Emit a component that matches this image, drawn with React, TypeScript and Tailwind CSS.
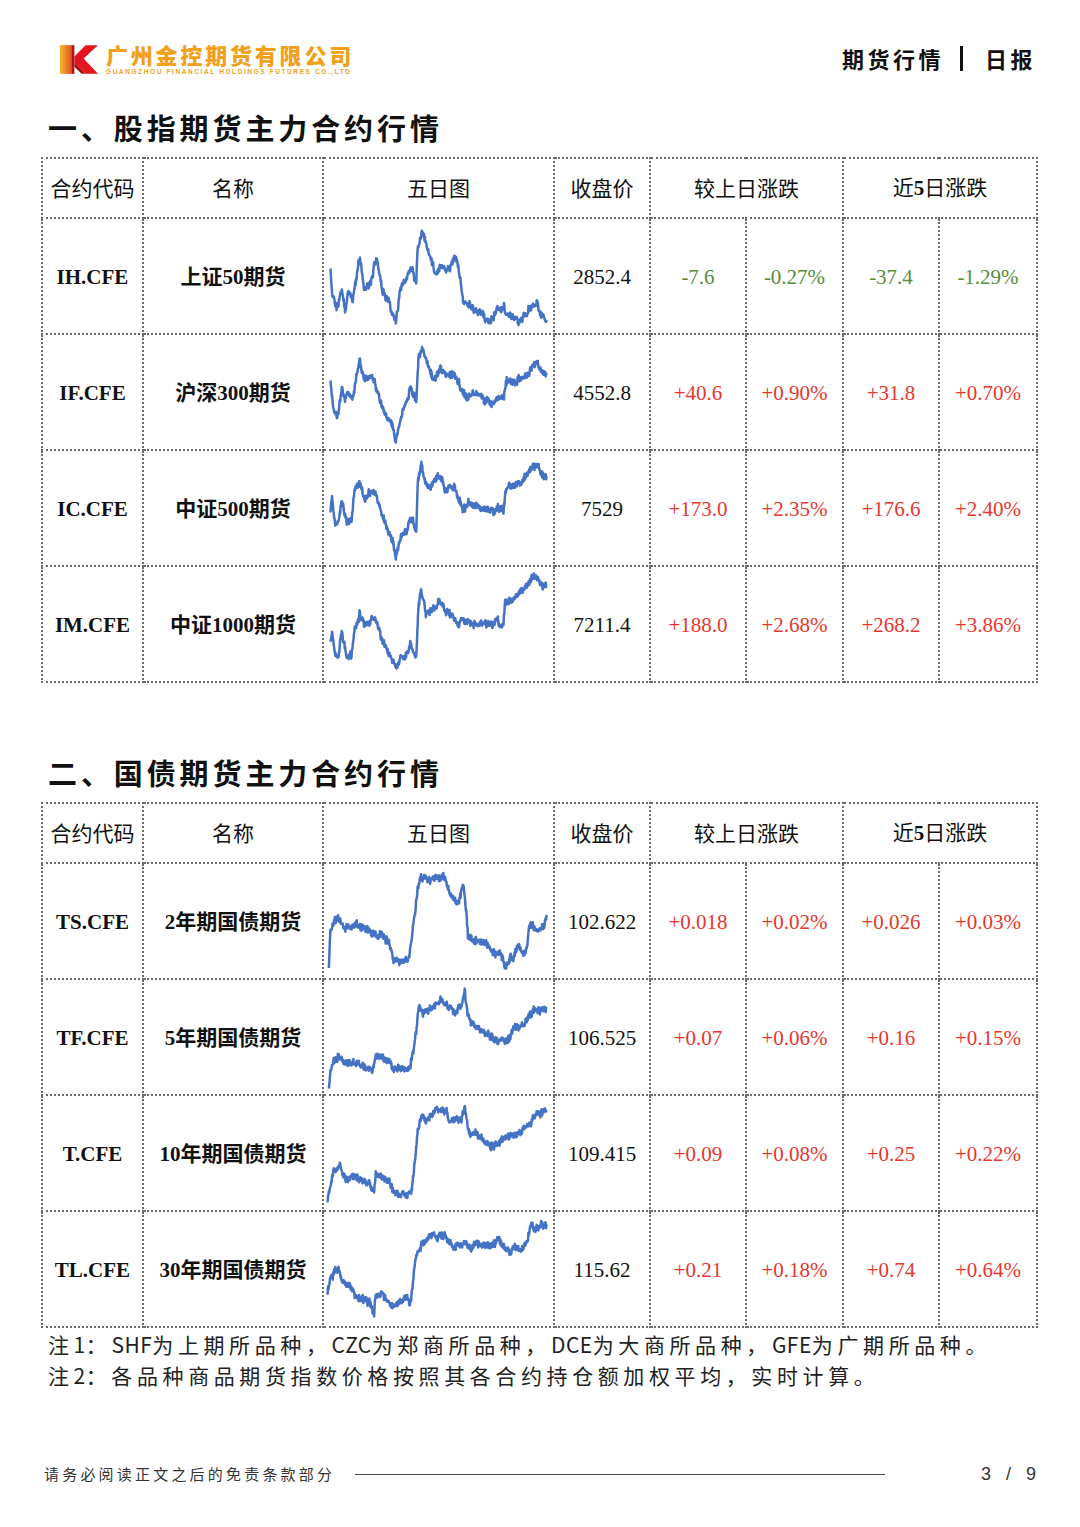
import React from "react";

type Pt = [number, number];

type Row = {
  code: string;
  name: string;
  close: string;
  d1: string;
  d1p: string;
  d5: string;
  d5p: string;
  up: boolean;
  line: Pt[];
  seed: number;
};

const stockRows: Row[] = [
  {
    code: "IH.CFE", name: "上证50期货", close: "2852.4", d1: "-7.6", d1p: "-0.27%", d5: "-37.4", d5p: "-1.29%", up: false, seed: 11,
    line: [[20,150],[25,230],[40,275],[55,215],[65,285],[78,215],[88,250],[100,180],[110,115],[125,220],[145,195],[155,140],[165,130],[180,220],[200,250],[210,290],[222,320],[235,225],[260,170],[270,150],[285,200],[290,90],[305,35],[320,90],[335,140],[345,175],[360,145],[375,155],[390,150],[405,115],[415,140],[430,250],[450,265],[470,280],[490,295],[510,320],[520,305],[535,275],[555,270],[565,290],[590,305],[605,315],[625,295],[645,260],[660,270],[675,300],[688,310]],
  },
  {
    code: "IF.CFE", name: "沪深300期货", close: "4552.8", d1: "+40.6", d1p: "+0.90%", d5: "+31.8", d5p: "+0.70%", up: true, seed: 23,
    line: [[20,150],[30,230],[42,245],[55,165],[65,200],[75,170],[90,200],[100,130],[110,75],[125,135],[150,125],[165,170],[180,225],[200,265],[212,280],[222,325],[235,265],[255,200],[268,155],[285,205],[292,80],[302,30],[320,90],[335,130],[345,135],[360,100],[375,120],[400,120],[415,140],[430,180],[445,185],[470,180],[490,190],[510,200],[525,210],[540,195],[555,190],[565,140],[590,145],[610,125],[630,120],[650,88],[662,90],[675,115],[688,120]],
  },
  {
    code: "IC.CFE", name: "中证500期货", close: "7529", d1: "+173.0", d1p: "+2.35%", d5: "+176.6", d5p: "+2.40%", up: true, seed: 37,
    line: [[20,180],[25,140],[35,230],[45,215],[55,150],[70,220],[85,215],[95,125],[110,90],[125,145],[150,115],[165,150],[180,200],[200,250],[212,275],[222,320],[235,265],[255,245],[268,200],[285,245],[290,90],[300,35],[315,100],[330,105],[345,85],[360,75],[375,115],[400,110],[415,140],[430,180],[445,160],[470,170],[490,175],[510,180],[525,185],[540,175],[555,180],[560,130],[575,105],[600,100],[625,75],[645,40],[660,45],[675,70],[688,75]],
  },
  {
    code: "IM.CFE", name: "中证1000期货", close: "7211.4", d1: "+188.0", d1p: "+2.68%", d5: "+268.2", d5p: "+3.86%", up: true, seed: 41,
    line: [[20,225],[25,195],[35,280],[45,275],[55,195],[70,275],[85,270],[95,190],[110,145],[125,180],[150,155],[165,170],[180,230],[200,265],[212,285],[222,310],[235,280],[255,270],[268,230],[285,280],[292,120],[300,70],[315,140],[330,130],[345,120],[360,105],[375,135],[400,150],[415,180],[425,160],[445,165],[470,175],[490,170],[510,175],[535,170],[555,175],[560,110],[575,100],[600,80],[625,55],[645,30],[660,30],[675,55],[688,58]],
  },
];

const bondRows: Row[] = [
  {
    code: "TS.CFE", name: "2年期国债期货", close: "102.622", d1: "+0.018", d1p: "+0.02%", d5: "+0.026", d5p: "+0.03%", up: true, seed: 53,
    line: [[15,320],[20,200],[30,180],[45,160],[60,195],[85,200],[100,185],[120,195],[140,205],[160,220],[180,215],[200,240],[215,290],[240,300],[260,295],[270,240],[280,160],[292,60],[300,35],[320,45],[340,40],[375,40],[390,90],[410,120],[420,110],[430,55],[440,150],[445,225],[470,235],[500,240],[515,260],[530,280],[545,265],[560,320],[575,290],[590,280],[600,250],[610,275],[625,270],[635,185],[650,195],[665,200],[680,185],[688,155]],
  },
  {
    code: "TF.CFE", name: "5年期国债期货", close: "106.525", d1: "+0.07", d1p: "+0.06%", d5: "+0.16", d5p: "+0.15%", up: true, seed: 67,
    line: [[15,330],[20,280],[30,250],[45,230],[70,260],[85,255],[110,260],[130,265],[150,285],[160,230],[175,235],[200,240],[215,270],[240,275],[265,270],[275,225],[285,150],[295,75],[305,100],[320,90],[340,80],[360,60],[375,70],[395,90],[410,95],[425,70],[435,35],[445,110],[460,140],[480,145],[500,165],[520,175],[535,190],[560,180],[575,175],[585,140],[600,145],[620,130],[640,100],[665,95],[688,80]],
  },
  {
    code: "T.CFE", name: "10年期国债期货", close: "109.415", d1: "+0.09", d1p: "+0.08%", d5: "+0.25", d5p: "+0.22%", up: true, seed: 71,
    line: [[10,325],[20,270],[30,235],[50,215],[65,255],[85,245],[100,250],[120,255],[140,270],[155,295],[160,240],[180,245],[200,260],[215,295],[235,305],[260,300],[272,285],[280,200],[290,110],[300,60],[320,75],[340,45],[360,40],[380,45],[390,75],[410,70],[425,75],[435,30],[445,100],[460,120],[480,115],[500,145],[515,155],[530,150],[545,140],[565,130],[580,125],[600,115],[620,95],[640,80],[655,55],[670,55],[688,40]],
  },
  {
    code: "TL.CFE", name: "30年期国债期货", close: "115.62", d1: "+0.21", d1p: "+0.18%", d5: "+0.74", d5p: "+0.64%", up: true, seed: 89,
    line: [[10,245],[20,200],[35,185],[45,175],[55,210],[75,225],[90,245],[100,265],[115,260],[130,270],[145,285],[155,320],[160,255],[175,250],[190,265],[205,285],[220,290],[240,275],[255,265],[268,280],[275,215],[285,130],[295,105],[315,90],[330,70],[350,75],[375,65],[385,95],[400,105],[420,100],[440,90],[455,115],[470,95],[490,100],[510,105],[525,95],[540,80],[555,100],[575,125],[590,105],[610,115],[625,95],[640,40],[655,55],[670,35],[688,35]],
  },
];

function rng(seed: number) {
  let a = seed;
  return () => {
    a |= 0;
    a = (a + 0x6d2b79f5) | 0;
    let t = Math.imul(a ^ (a >>> 15), 1 | a);
    t = (t + Math.imul(t ^ (t >>> 7), 61 | t)) ^ t;
    return ((t ^ (t >>> 14)) >>> 0) / 4294967296;
  };
}

// interpolate the key points and add tick noise so it looks like intraday data
function buildPath(pts: Pt[], seed: number) {
  const r = rng(seed);
  const out: string[] = [];
  let walk = 0;
  for (let i = 0; i < pts.length - 1; i++) {
    const [x0, y0] = pts[i];
    const [x1, y1] = pts[i + 1];
    const steps = Math.max(1, Math.round((x1 - x0) / 1.2));
    for (let s = 0; s < steps; s++) {
      const t = s / steps;
      const x = x0 + (x1 - x0) * t;
      walk = walk * 0.6 + (r() - 0.5) * 12;
      const tick = (r() - 0.5) * 16;
      const y = y0 + (y1 - y0) * t + walk + tick;
      out.push(`${x.toFixed(1)},${y.toFixed(1)}`);
    }
  }
  const last = pts[pts.length - 1];
  out.push(`${last[0]},${last[1]}`);
  return "M" + out.join("L");
}

function Spark({ pts, seed }: { pts: Pt[]; seed: number }) {
  return (
    <svg viewBox="0 0 708 348" preserveAspectRatio="none" className="block w-full h-full">
      <path
        d={buildPath(pts, seed)}
        fill="none"
        stroke="#4472c4"
        strokeWidth={2.5}
        strokeLinejoin="round"
        vectorEffect="non-scaling-stroke"
      />
    </svg>
  );
}

function Logo() {
  return (
    <div className="flex items-center gap-[7px]">
      <svg width="39" height="33" viewBox="0 0 38 32">
        <defs>
          <linearGradient id="kbar" x1="0" y1="0" x2="1" y2="0">
            <stop offset="0" stopColor="#f7b733" />
            <stop offset="1" stopColor="#e0551f" />
          </linearGradient>
        </defs>
        <polygon points="0,2 11,2 11,30 0,30" fill="url(#kbar)" />
        <polygon points="11,2 14,2 14,30 11,30" fill="#b3121b" />
        <polygon points="14,13 25,2 37,2 23,15 37,30 25,30 14,19" fill="#e3161f" />
        <polygon points="14,19 25,30 21,30 14,23" fill="#a10e16" />
      </svg>
      <div className="flex flex-col">
        <span className="font-['Noto_Sans_CJK_SC',sans-serif] text-[22px] leading-[24px] font-black tracking-[2.8px] text-[#f2a018]">
          广州金控期货有限公司
        </span>
        <span className="font-['Liberation_Sans',sans-serif] text-[6.5px] leading-[9px] font-bold tracking-[1.6px] text-[#f2a018] mt-[1px]">
          GUANGZHOU FINANCIAL HOLDINGS FUTURES CO.,LTD
        </span>
      </div>
    </div>
  );
}

const cell = "border-2 border-dotted border-[#6b6b6b] text-center align-middle p-0";

function MarketTable({ rows }: { rows: Row[] }) {
  return (
    <table className="border-collapse table-fixed w-[995px]">
      <colgroup>
        <col className="w-[101px]" />
        <col className="w-[180px]" />
        <col className="w-[231px]" />
        <col className="w-[96px]" />
        <col className="w-[96px]" />
        <col className="w-[97px]" />
        <col className="w-[96px]" />
        <col className="w-[98px]" />
      </colgroup>
      <thead>
        <tr className="h-[60px] font-['Noto_Sans_CJK_SC',sans-serif] text-[21px] text-[#111]">
          <th className={`${cell} font-normal`}>合约代码</th>
          <th className={`${cell} font-normal`}>名称</th>
          <th className={`${cell} font-normal`}>五日图</th>
          <th className={`${cell} font-normal`}>收盘价</th>
          <th colSpan={2} className={`${cell} font-normal`}>较上日涨跌</th>
          <th colSpan={2} className={`${cell} font-normal`}>
            <span>近</span>
            <span className="font-['Liberation_Serif',serif] font-bold">5</span>
            <span>日涨跌</span>
          </th>
        </tr>
      </thead>
      <tbody>
        {rows.map((r) => {
          const tone = r.up ? "text-[#e8362f]" : "text-[#5a8c3a]";
          return (
            <tr key={r.code} className="h-[116px] font-['Liberation_Serif','Noto_Sans_CJK_SC',serif] text-[21px]">
              <td className={`${cell} font-bold text-[#111] pt-[3px]`}>{r.code}</td>
              <td className={`${cell} font-bold text-[#111] pt-[3px]`}>{r.name}</td>
              <td className={`${cell} h-[116px]`}>
                <div className="h-[112px] w-full">
                  <Spark pts={r.line} seed={r.seed} />
                </div>
              </td>
              <td className={`${cell} text-[#111] pt-[3px]`}>{r.close}</td>
              <td className={`${cell} ${tone} pt-[3px]`}>{r.d1}</td>
              <td className={`${cell} ${tone} pt-[3px]`}>{r.d1p}</td>
              <td className={`${cell} ${tone} pt-[3px]`}>{r.d5}</td>
              <td className={`${cell} ${tone} pt-[3px]`}>{r.d5p}</td>
            </tr>
          );
        })}
      </tbody>
    </table>
  );
}

function SectionTitle({ children }: { children: React.ReactNode }) {
  return (
    <h2 className="pl-[7px] font-['Noto_Sans_CJK_SC',sans-serif] text-[29px] leading-[34px] font-bold tracking-[3.9px] text-[#111]">
      {children}
    </h2>
  );
}

function Latin({ children }: { children: React.ReactNode }) {
  return <span className="tracking-[0.5px]">{children}</span>;
}

export default function App() {
  return (
    <div className="w-[1080px] h-[1527px] bg-white relative">
      {/* Header */}
      <header className="flex items-center justify-between pl-[60px] pr-[44px] pt-[42px]">
        <Logo />
        <div className="flex items-center font-['Noto_Sans_CJK_SC',sans-serif] text-[22px] font-bold tracking-[3.5px] text-[#111] -mt-[2px]">
          <span>期货行情</span>
          <span className="ml-[16px] mr-[22px] inline-block w-[3px] h-[25px] bg-[#111]" />
          <span>日报</span>
        </div>
      </header>

      <div className="pl-[41px] pt-[34px]">
        <SectionTitle>一、股指期货主力合约行情</SectionTitle>
        <div className="mt-[13px]">
          <MarketTable rows={stockRows} />
        </div>

        <div className="mt-[72px]">
          <SectionTitle>二、国债期货主力合约行情</SectionTitle>
        </div>
        <div className="mt-[13px]">
          <MarketTable rows={bondRows} />
        </div>

        <div className="pl-[7px] mt-[1px] font-['Noto_Sans_CJK_SC',sans-serif] text-[21px] leading-[31px] tracking-[4.6px] text-[#222]">
          <p>
            注<Latin>1</Latin>：<Latin>SHF</Latin>为上期所品种，<Latin>CZC</Latin>为郑商所品种，<Latin>DCE</Latin>为大商所品种，<Latin>GFE</Latin>为广期所品种。
          </p>
          <p>
            注<Latin>2</Latin>：各品种商品期货指数价格按照其各合约持仓额加权平均，实时计算。
          </p>
        </div>
      </div>

      {/* Footer */}
      <footer className="absolute left-[44px] right-[44px] top-[1461px] flex items-center font-['Noto_Sans_CJK_SC',sans-serif] text-[#333]">
        <span className="text-[15px] tracking-[3.2px]">请务必阅读正文之后的免责条款部分</span>
        <span className="ml-[20px] w-[530px] h-[1px] bg-[#444]" />
        <span className="ml-auto font-['Liberation_Sans',sans-serif] text-[18px] tracking-[5px] -mr-[5px]">3 / 9</span>
      </footer>
    </div>
  );
}
